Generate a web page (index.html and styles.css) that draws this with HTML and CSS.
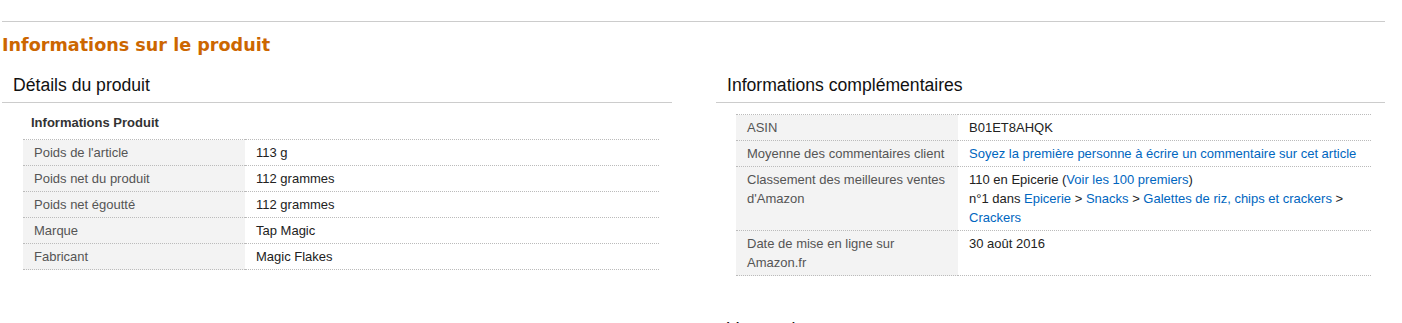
FILE: index.html
```html
<!DOCTYPE html>
<html>
<head>
  <meta http-equiv="content-type" content="text/html; charset=utf-8" />
  <title>Informations sur le produit</title>
  <link rel="stylesheet" href="styles.css">
</head>

<body>
  <div class="prodDetails">
    <hr class="bucketDivider">
    <h2 class="sectionTitle">Informations sur le produit</h2>

    <div class="columns">
      <div class="column">
        <h3 class="columnTitle">Détails du produit</h3>
        <div class="section techD">
          <div class="secHeader">Informations Produit</div>
          <table class="prodDetTable">
            <tr><th>Poids de l'article</th><td>113 g</td></tr>
            <tr><th>Poids net du produit</th><td>112 grammes</td></tr>
            <tr><th>Poids net égoutté</th><td>112 grammes</td></tr>
            <tr><th>Marque</th><td>Tap Magic</td></tr>
            <tr><th>Fabricant</th><td>Magic Flakes</td></tr>
          </table>
        </div>
      </div>

      <div class="column">
        <h3 class="columnTitle">Informations complémentaires</h3>
        <div class="section addl">
          <table class="prodDetTable">
            <tr><th>ASIN</th><td>B01ET8AHQK</td></tr>
            <tr>
              <th>Moyenne des commentaires client</th>
              <td><a href="#">Soyez la première personne à écrire un commentaire sur cet article</a></td>
            </tr>
            <tr>
              <th>Classement des meilleures ventes d'Amazon</th>
              <td>
                110 en Epicerie (<a href="#">Voir les 100 premiers</a>)<br>
                n°1 dans <a href="#">Epicerie</a> &gt; <a href="#">Snacks</a> &gt; <a href="#">Galettes de riz, chips et crackers</a> &gt; <a href="#">Crackers</a>
              </td>
            </tr>
            <tr><th>Date de mise en ligne sur Amazon.fr</th><td>30 août 2016</td></tr>
          </table>
        </div>
        <h3 class="columnTitle plain">Votre avis</h3>
      </div>
    </div>
  </div>
</body>

</html>
```

FILE: styles.css
```css
body {
  margin: 0;
  background: #fff;
  font-family: "Liberation Sans", Arial, sans-serif;
  font-size: 13px;
  line-height: 19px;
  color: #111;
}
.prodDetails {
  width: 1383px;
  margin-left: 2px;
  padding-top: 21px;
}
hr.bucketDivider {
  margin: 0;
  border: 0;
  border-top: 1px solid #ccc;
}
h2.sectionTitle {
  margin: 12px 0 0 0;
  font-family: "DejaVu Sans", Verdana, sans-serif;
  font-size: 17.6px;
  line-height: 22px;
  font-weight: bold;
  color: #c60;
}
.columns {
  display: flex;
  gap: 44px;
}
.column {
  width: 670px;
}
.column + .column {
  width: 669px;
}
h3.columnTitle {
  margin: 18px 0 0 0;
  padding: 0 0 6px 11px;
  font-size: 17.6px;
  line-height: 22px;
  font-weight: normal;
  color: #111;
  border-bottom: 1px solid #ccc;
}
h3.columnTitle.plain {
  margin-top: 42px;
  border-bottom: 0;
}
.section.techD {
  margin: 10px 13px 0 21px;
}
.section.addl {
  margin: 11px 14px 0 20px;
}
.secHeader {
  font-weight: bold;
  color: #333;
  padding-left: 8px;
  margin-bottom: 7px;
}
table.prodDetTable {
  width: 100%;
  border-collapse: collapse;
  border-bottom: 1px dotted #bbb;
}
.prodDetTable tr {
  border-top: 1px dotted #bbb;
}
.prodDetTable th {
  width: 200px;
  padding: 3px 11px;
  background: #f3f3f3;
  color: #555;
  font-weight: normal;
  text-align: left;
  vertical-align: top;
}
.prodDetTable td {
  padding: 3px 11px;
  color: #222;
  vertical-align: top;
}
.prodDetTable a {
  color: #0066c0;
  text-decoration: none;
}
```
